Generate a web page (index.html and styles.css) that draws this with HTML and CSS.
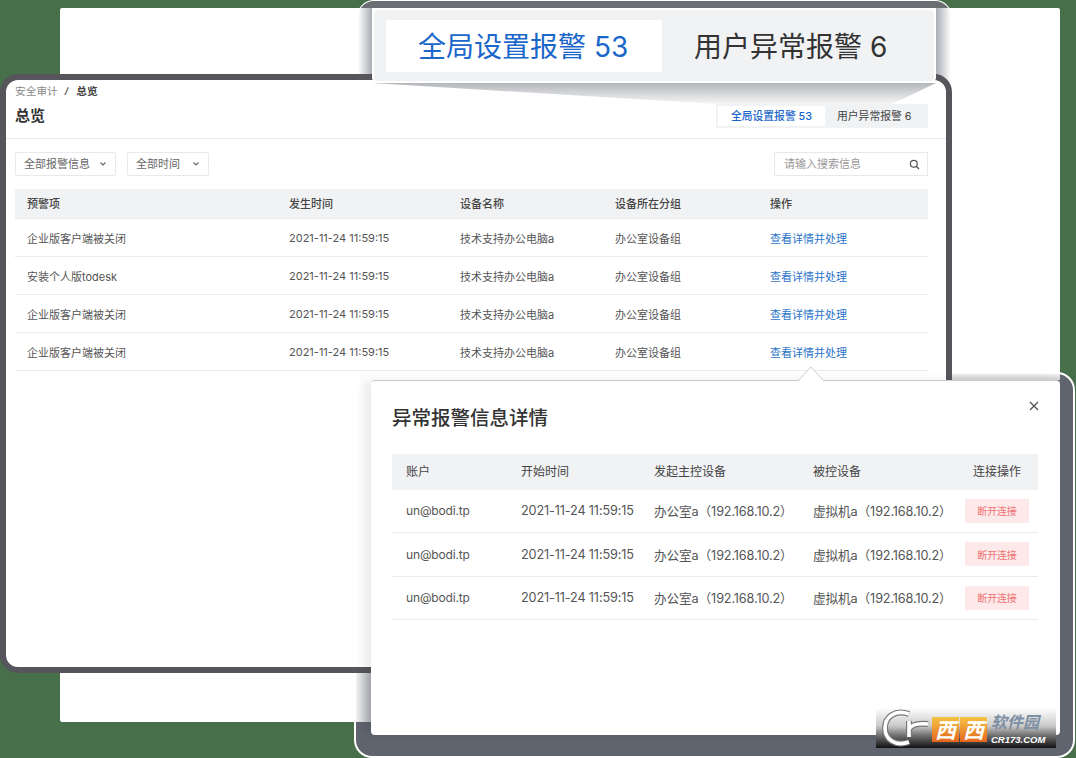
FILE: index.html
```html
<!DOCTYPE html>
<html lang="en">
<head>
  <meta charset="UTF-8">
  <title>总览</title>
  <link rel="stylesheet" href="styles.css">
</head>
<body>
  <div class="stage">
    <div class="backdrop"></div>
    <div class="callout-frame"></div>
    <div class="modal-frame"></div>

    <!-- Main window -->
    <div class="window">
      <div class="head">
        <div class="head-left">
          <div class="crumbs"><span>安全审计</span><i>/</i><b>总览</b></div>
          <div class="title">总览</div>
        </div>
        <div class="tabs">
          <div class="tab active">全局设置报警 53</div>
          <div class="tab">用户异常报警 6</div>
        </div>
      </div>

      <div class="toolbar">
        <div class="select select-wide"><span>全部报警信息</span>
          <svg width="8" height="6" viewBox="0 0 8 6"><path d="M1.5 1.5 4 4l2.5-2.5" fill="none" stroke="#666" stroke-width="1.1"/></svg>
        </div>
        <div class="select select-narrow"><span>全部时间</span>
          <svg width="8" height="6" viewBox="0 0 8 6"><path d="M1.5 1.5 4 4l2.5-2.5" fill="none" stroke="#666" stroke-width="1.1"/></svg>
        </div>
        <div class="search"><span>请输入搜索信息</span>
          <svg width="11" height="11" viewBox="0 0 11 11"><circle cx="4.8" cy="4.8" r="3.4" fill="none" stroke="#555" stroke-width="1.2"/><path d="M7.3 7.3 10 10" stroke="#555" stroke-width="1.3"/></svg>
        </div>
      </div>

      <div class="table">
        <div class="row row-head"><div>预警项</div><div>发生时间</div><div>设备名称</div><div>设备所在分组</div><div>操作</div></div>
        <div class="row"><div>企业版客户端被关闭</div><div>2021-11-24 11:59:15</div><div>技术支持办公电脑a</div><div>办公室设备组</div><div class="link">查看详情并处理</div></div>
        <div class="row"><div>安装个人版todesk</div><div>2021-11-24 11:59:15</div><div>技术支持办公电脑a</div><div>办公室设备组</div><div class="link">查看详情并处理</div></div>
        <div class="row"><div>企业版客户端被关闭</div><div>2021-11-24 11:59:15</div><div>技术支持办公电脑a</div><div>办公室设备组</div><div class="link">查看详情并处理</div></div>
        <div class="row"><div>企业版客户端被关闭</div><div>2021-11-24 11:59:15</div><div>技术支持办公电脑a</div><div>办公室设备组</div><div class="link">查看详情并处理</div></div>
      </div>
    </div>

    <!-- Zoomed tabs callout -->
    <div class="wedge"></div>
    <div class="callout">
      <div class="big-tab active">全局设置报警 53</div>
      <div class="big-tab">用户异常报警 6</div>
    </div>

    <!-- Detail popup -->
    <div class="modal">
      <svg class="arrow" width="30" height="15" viewBox="0 0 30 15"><path d="M1 15 14 1l13 14" fill="#fff" stroke="#ccc"/></svg>
      <div class="modal-title">异常报警信息详情</div>
      <svg class="close" width="10" height="10" viewBox="0 0 10 10"><path d="M1 1l8 8M9 1 1 9" stroke="#555" stroke-width="1.3"/></svg>
      <div class="detail">
        <div class="detail-row detail-head"><div>账户</div><div>开始时间</div><div>发起主控设备</div><div>被控设备</div><div class="action-head">连接操作</div></div>
        <div class="detail-row"><div class="account">un@bodi.tp</div><div>2021-11-24 11:59:15</div><div>办公室a（192.168.10.2）</div><div>虚拟机a（192.168.10.2）</div><div class="cut">断开连接</div></div>
        <div class="detail-row"><div class="account">un@bodi.tp</div><div>2021-11-24 11:59:15</div><div>办公室a（192.168.10.2）</div><div>虚拟机a（192.168.10.2）</div><div class="cut">断开连接</div></div>
        <div class="detail-row"><div class="account">un@bodi.tp</div><div>2021-11-24 11:59:15</div><div>办公室a（192.168.10.2）</div><div>虚拟机a（192.168.10.2）</div><div class="cut">断开连接</div></div>
      </div>
    </div>

    <!-- Watermark -->
    <div class="mark">
      <svg class="mark-logo" width="50" height="38" viewBox="0 0 50 38">
        <g fill="none" stroke="#777" stroke-width="6">
          <path d="M27 5C13 0 3 8 3 19s10 19 24 14"/>
          <path d="M27 12v16M27 20c3-5 9-6 19-5"/>
        </g>
        <g fill="none" stroke="#fff" stroke-width="3.6">
          <path d="M27 5C13 0 3 8 3 19s10 19 24 14"/>
          <path d="M27 12v16M27 20c3-5 9-6 19-5"/>
        </g>
      </svg>
      <div class="mark-tile">西</div>
      <div class="mark-tile">西</div>
      <div class="mark-text">
        <div class="mark-cn">软件园</div>
        <div class="mark-en">CR173.COM</div>
      </div>
    </div>
  </div>
</body>
</html>
```

FILE: styles.css
```css
* {
  box-sizing: border-box;
}

body {
  margin: 0;
  font-family: Inter, "Noto Sans CJK SC", sans-serif;
  color: #444;
}

.stage {
  position: relative;
  width: 1076px;
  height: 758px;
  overflow: hidden;
  background: #476f4a;
}

.backdrop {
  position: absolute;
  left: 60px;
  top: 8px;
  width: 1000px;
  height: 714px;
  background: #fff;
  border-radius: 2px;
}

/* Soft frames that sit behind the windows */
.callout-frame {
  position: absolute;
  left: 358px;
  top: 1px;
  width: 593px;
  height: 90px;
  border-radius: 16px 16px 0 0;
  box-shadow: 0 0 0 1px #fff;
  background:
    linear-gradient(#6b6d72, #6b6d72) 0 0 / 100% 7px no-repeat,
    linear-gradient(to right, #fff, #a9acb2) 0 0 / 14px 100% no-repeat,
    linear-gradient(to right, #a9acb2, #fff) 100% 0 / 15px 100% no-repeat,
    #fff;
}

.modal-frame {
  position: absolute;
  left: 356px;
  top: 374px;
  width: 717px;
  height: 382px;
  border-radius: 16px;
  box-shadow: 0 0 0 2px #fff;
  background:
    linear-gradient(to right, #f4f4f5, #aeb1b7) 0 0 / 15px 348px no-repeat,
    linear-gradient(#eceded, #cfd0d2) 0 0 / 704px 6px no-repeat,
    #5f646e;
}

.window {
  position: absolute;
  left: 0;
  top: 74px;
  width: 952px;
  height: 599px;
  background: #fff;
  border: 6px solid #55555b;
  border-radius: 18px;
}

.head {
  display: flex;
  justify-content: space-between;
  height: 59px;
  padding: 0 18px 10px 9px;
  border-bottom: 1px solid #e9eaec;
}

.crumbs {
  display: flex;
  align-items: center;
  gap: 7px;
  margin-top: 2px;
  height: 16px;
  font-size: 10.7px;
  color: #8a8a8a;
}

.crumbs i {
  font-size: 9px;
  font-weight: 700;
  color: #555;
}

.crumbs b {
  margin-left: 1px;
  color: #444;
  font-weight: 700;
}

.title {
  margin-top: 8px;
  font-size: 15px;
  font-weight: 700;
  line-height: 20px;
  color: #333;
}

.tabs {
  display: flex;
  align-self: flex-end;
  width: 212px;
  height: 24px;
  padding: 2px;
  background: #f1f2f4;
  position: relative;
  z-index: 3;
}

.tab {
  display: flex;
  align-items: center;
  padding: 0 12px 2px;
  font-size: 10.8px;
  color: #444;
  white-space: nowrap;
}

.tab.active {
  width: 107px;
  justify-content: center;
  background: #fff;
  color: #1a66c9;
  font-weight: 500;
}

.toolbar {
  display: flex;
  align-items: center;
  gap: 11px;
  padding: 13px 18px 13px 9px;
}

.select {
  display: flex;
  align-items: center;
  justify-content: space-between;
  height: 24px;
  padding: 0 8px;
  border: 1px solid #e8e9eb;
  border-radius: 2px;
  font-size: 11px;
  color: #666;
}

.select span,
.search span {
  margin-bottom: 2px;
}

.select-wide {
  width: 101px;
}

.select-narrow {
  width: 82px;
}

.search {
  display: flex;
  align-items: center;
  justify-content: space-between;
  width: 154px;
  height: 24px;
  margin-left: auto;
  padding: 0 7px 0 9px;
  border: 1px solid #e8e9eb;
  font-size: 11px;
  color: #999;
}

.table {
  margin: 0 18px 0 9px;
  font-size: 11px;
}

.row {
  display: grid;
  grid-template-columns: 262px 171px 155px 155px 1fr;
  align-items: center;
  height: 38px;
  padding-left: 12px;
  border-bottom: 1px solid #e9eaec;
  color: #555;
}

.row-head {
  height: 30px;
  padding-bottom: 1px;
  background: #f1f2f4;
  color: #444;
  font-weight: 500;
}

.link {
  color: #2b74c9;
}

/* Zoomed tabs callout */
.wedge {
  position: absolute;
  left: 372px;
  top: 83px;
  width: 564px;
  height: 24px;
  background: linear-gradient(#b4b7bc, #fff);
  clip-path: polygon(0 0, 100% 0, 514px 24px, 344px 21px);
}

.callout {
  position: absolute;
  left: 372px;
  top: 8px;
  display: flex;
  width: 564px;
  height: 75px;
  padding: 12px 13px 11px 14px;
  background: #f1f2f4;
  border-radius: 6px;
  box-shadow: inset 0 0 0 2px #fff;
}

.big-tab {
  display: flex;
  align-items: center;
  padding: 0 0 3px 32px;
  font-size: 28px;
  color: #333;
  white-space: nowrap;
}

.big-tab.active {
  width: 276px;
  background: #fff;
  color: #1a66c9;
}

/* Detail popup */
.modal {
  position: absolute;
  left: 371px;
  top: 380px;
  width: 689px;
  height: 355px;
  padding: 0 22px 0 21px;
  background: #fff;
  border-top: 1px solid #ccc;
  border-radius: 4px;
  box-shadow: -8px 0 10px rgba(0, 0, 0, 0.07);
}

.arrow {
  position: absolute;
  left: 426px;
  top: -15px;
}

.close {
  position: absolute;
  left: 658px;
  top: 20px;
}

.modal-title {
  padding-top: 25px;
  height: 73px;
  font-size: 19.5px;
  font-weight: 500;
  line-height: 24px;
  color: #333;
}

.detail-row {
  display: grid;
  grid-template-columns: 115px 133px 159px 152px 1fr;
  align-items: center;
  height: 43.5px;
  padding-left: 14px;
  border-bottom: 1px solid #e9eaec;
  font-size: 12.7px;
  letter-spacing: -0.15px;
  color: #555;
}

.account {
  font-size: 12px;
}

.detail-head {
  height: 35.5px;
  padding-bottom: 3px;
  background: #f1f2f4;
  border-bottom: 0;
  font-size: 12px;
  letter-spacing: 0;
  color: #444;
}

.action-head {
  padding-left: 8px;
  white-space: nowrap;
}

.cut {
  display: flex;
  align-items: center;
  justify-content: center;
  width: 64px;
  height: 24px;
  background: #fde9e9;
  font-size: 10px;
  color: #ee7474;
}

/* Watermark */
.mark {
  position: absolute;
  left: 876px;
  top: 708px;
  display: flex;
  align-items: center;
  width: 180px;
  height: 40px;
  background: linear-gradient(#fff 0, #c9c9c9 45%, #6b6b6b 70%, #111 100%);
}

.mark-logo {
  margin-left: 6px;
  flex: none;
}

.mark-tile {
  width: 27px;
  height: 25px;
  margin: 3px 1px 0 0;
  background: linear-gradient(#f5c443, #e4651f);
  font-family: "Noto Sans CJK SC", sans-serif;
  font-size: 21px;
  font-weight: 700;
  font-style: italic;
  line-height: 24px;
  text-align: center;
  color: #fff;
}

.mark-text {
  margin-left: 3px;
  color: #fff;
}

.mark-cn {
  height: 22px;
  font-family: "Noto Sans CJK SC", sans-serif;
  font-size: 16px;
  font-weight: 700;
  font-style: italic;
  line-height: 18px;
  color: #7c8fa3;
}

.mark-en {
  font-family: "Liberation Sans", sans-serif;
  font-size: 9.5px;
  font-weight: 700;
  font-style: italic;
  line-height: 11px;
}
```
